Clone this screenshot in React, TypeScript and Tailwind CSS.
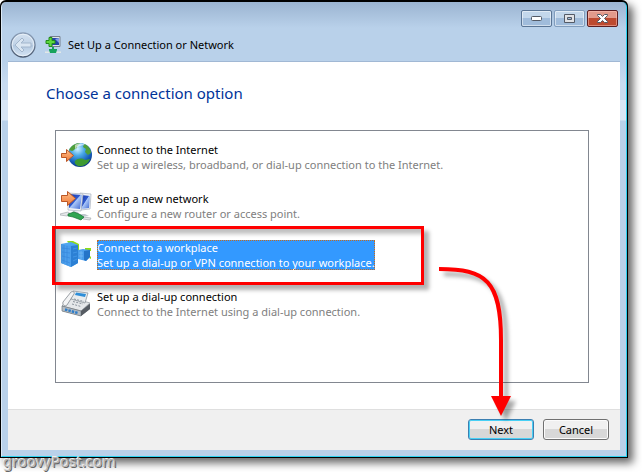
import { useState, type ReactNode } from "react";

function GlobeIcon() {
  return (
    <svg width="32" height="32" viewBox="0 0 32 32" aria-hidden="true">
      <defs>
        <radialGradient id="globe" cx=".4" cy=".25" r=".8">
          <stop offset="0" stopColor="#d3f2ff" />
          <stop offset=".35" stopColor="#4aa9e8" />
          <stop offset=".75" stopColor="#1358b4" />
          <stop offset="1" stopColor="#0a2f78" />
        </radialGradient>
        <linearGradient id="orange" x2="0" y2="1">
          <stop stopColor="#ffc08a" />
          <stop offset="1" stopColor="#f07836" />
        </linearGradient>
      </defs>
      <circle cx="20" cy="14" r="12" fill="url(#globe)" />
      <path d="M9 9c2-4 6-7 11-7-1 2-3 2-3 5-2 0-3 3-5 3zM24 3c4 1 7 5 7 9l-3 2-3-3 1-3-3-2z" fill="#4f9f3a" />
      <path d="M15 20c3-3 7-3 10-1 2 0 3-1 5-1-2 5-7 8-12 7-2-1-4-3-3-5z" fill="#3e9a31" />
      <path d="M15 4c3-2 7-2 10 0-3 0-7 1-10 4z" fill="#fff" opacity=".6" />
      <path d="M1.500 12.500h5v-4l7 6-7 6v-4h-5z" fill="url(#orange)" stroke="#bb5726" />
    </svg>
  );
}

function ComputersIcon() {
  return (
    <svg width="32" height="32" viewBox="0 0 32 32" aria-hidden="true">
      <defs>
        <linearGradient id="screen" x2="1" y2="1">
          <stop stopColor="#1433a8" />
          <stop offset=".45" stopColor="#2f59cc" />
          <stop offset=".5" stopColor="#a9c6f8" />
          <stop offset="1" stopColor="#3a63d0" />
        </linearGradient>
      </defs>
      <path d="M20 3l11 1-1 15-9 1z" fill="#f2f4f7" stroke="#a8b0bd" strokeWidth=".7" />
      <path d="M21 5l9 1-1 12-8 1z" fill="url(#screen)" />
      <path d="M8 3l15 1-2 17-13-1z" fill="#f2f4f7" stroke="#a8b0bd" strokeWidth=".7" />
      <path d="M9 4l13 1-2 14-11-1z" fill="url(#screen)" />
      <path d="M13 21l5 1 1 2h6l4 2-9 1-9-3z" fill="#c2c8cf" />
      <path d="M0 24l8-2 3 2-4 2-7-1zM23 27l8 1-1 2-7-1z" fill="#e6e8ea" stroke="#9ba1a6" strokeWidth=".6" />
      <path d="M8 24l6-2 5 2 5 3-3 3-8-3-5-1z" fill="#31a551" stroke="#187336" strokeWidth=".7" />
      <path d="M1.500 5.500h6v-4l8 7-8 7v-4h-6z" fill="url(#orange)" stroke="#bb5726" />
    </svg>
  );
}

function BuildingsIcon() {
  return (
    <svg width="32" height="32" viewBox="0 0 32 32" aria-hidden="true">
      <path d="M7 2h6l6 3v8h-4z" fill="#8fdc16" />
      <path d="M1 5l10-2 7 3v18l-7 4-10-4z" fill="#4fa6f2" />
      <path d="M11 7l7-1v18l-7 4z" fill="#2c80d4" />
      <path d="M1 5l10 2v21L1 24z" fill="#4b9eec" />
      <path d="M2 9l8 1M2 13l8 1M2 17l8 2M2 21l8 3M4 6v18M7 7v19" stroke="#3688dd" strokeWidth=".7" />
      <path d="M13 10l4-1M13 14l4-1M13 18l4-1M13 22l4-2" stroke="#4b9eec" strokeWidth=".7" />
      <path d="M25 9h6v3h-6zM29 19l2-2v3z" fill="#8fdc16" />
      <path d="M18 11l5-1 7 1v7l-4 4-8-2z" fill="#4b9eec" />
      <path d="M24 12l6-1v7l-4 4-2-1z" fill="#2474c8" />
      <path d="M19 14h4M19 17h4M21 12v8" stroke="#7abbf5" strokeWidth=".7" />
    </svg>
  );
}

function PhoneIcon() {
  return (
    <svg width="32" height="32" viewBox="0 0 32 32" aria-hidden="true">
      <path d="M2 18l8-8 20 6v5l-9 7-19-5z" fill="#7d8389" />
      <path d="M2 18l8-9 20 6-9 8z" fill="#e5e8ea" stroke="#8b9298" strokeWidth=".7" />
      <path d="M2 18l19 5v5L2 23z" fill="#b6bdc4" stroke="#71787e" strokeWidth=".7" />
      <path d="M21 23l9-7v5l-9 7z" fill="#565c63" />
      <path d="M13 3l15 2-3 10-14-4z" fill="#e8ecee" stroke="#838b92" strokeWidth=".7" />
      <path d="M16 4.500l10 1.500-1 3-10-2z" fill="#2e8ed8" />
      <path d="M3 14l8-10c2-1 4 0 3 2L7 17c-2 2-5 0-4-3z" fill="#f3f4f5" stroke="#81888f" strokeWidth=".8" />
      <path d="M14 11l10 2.500M13 13.500l10 2.500M12 16l9 2.500" stroke="#8b949d" strokeDasharray="2 1.300" />
      <path d="M5 21.500l13 3.500" stroke="#2f7ec9" strokeWidth="2.500" strokeDasharray="2.500 1" />
    </svg>
  );
}

function NetworkIcon() {
  return (
    <svg width="16" height="18" viewBox="0 0 16 18" aria-hidden="true">
      <path d="M5 .5h10v10H7z" fill="#dfe4ea" stroke="#77808d" />
      <path d="M7 2h7v7H7z" fill="#2443a6" />
      <path d="M10 3l4-1v5z" fill="#7f9ee8" />
      <path d="M0 15.500h16v1.500H0z" fill="#e1e8e7" />
      <path d="M7 11h2v2h3v1l-1 3H5l-1-3v-1h3z" fill="#17a35c" />
      <path d="M4 1.500h3v3h3v3H7v3H4v-3H1v-3h3z" fill="#5fd83c" stroke="#228a1c" />
    </svg>
  );
}

type Option = {
  id: string;
  title: string;
  detail: string;
  icon: ReactNode;
};

const OPTIONS: Option[] = [
  {
    id: "internet",
    title: "Connect to the Internet",
    detail: "Set up a wireless, broadband, or dial-up connection to the Internet.",
    icon: <GlobeIcon />,
  },
  {
    id: "network",
    title: "Set up a new network",
    detail: "Configure a new router or access point.",
    icon: <ComputersIcon />,
  },
  {
    id: "workplace",
    title: "Connect to a workplace",
    detail: "Set up a dial-up or VPN connection to your workplace.",
    icon: <BuildingsIcon />,
  },
  {
    id: "dialup",
    title: "Set up a dial-up connection",
    detail: "Connect to the Internet using a dial-up connection.",
    icon: <PhoneIcon />,
  },
];

function CaptionButtons() {
  const glass =
    "flex h-[17px] w-[31px] items-center justify-center rounded-[2px] border bg-linear-to-b from-[#c3d7eb] from-50% to-[#a0bcdb] to-50% shadow-[inset_0_0_0_1px_rgba(255,255,255,0.5)]";
  return (
    <div className="flex justify-end gap-0.5 pr-2">
      <button aria-label="Minimize" className={`${glass} border-[#5a7595]`}>
        <svg width="11" height="5" viewBox="0 0 11 5">
          <rect x=".5" y=".5" width="10" height="4" rx="1" fill="#fff" stroke="#535a66" />
        </svg>
      </button>
      <button aria-label="Maximize" className={`${glass} border-[#819dbd]`}>
        <svg width="11" height="9" viewBox="0 0 11 9">
          <path d="M.5.5h10v8H.5z M3.500 3.500h4v2h-4z" fill="#e0e2e6" fillRule="evenodd" stroke="#535a66" />
        </svg>
      </button>
      <button
        aria-label="Close"
        className="flex h-[17px] w-[31px] items-center justify-center rounded-[2px] border border-[#5c1e22] bg-linear-to-b from-[#e29a8b] from-50% to-[#bd4a30] to-50% shadow-[inset_0_0_0_1px_rgba(255,200,190,0.5)]"
      >
        <svg width="11" height="9" viewBox="0 0 11 9">
          <path d="M.5.5h3l2 2 2-2h3v1l-3 3 3 3v1h-3l-2-2-2 2h-3v-1l3-3-3-3z" fill="#fff" stroke="#535a66" />
        </svg>
      </button>
    </div>
  );
}

function OptionRow({ option, selected, onSelect }: { option: Option; selected: boolean; onSelect: () => void }) {
  return (
    <li className="relative">
      <button
        onClick={onSelect}
        aria-pressed={selected}
        className="flex h-[30px] items-center gap-[5px] text-left leading-[15px]"
      >
        <span className="shrink-0">{option.icon}</span>
        <span
          className={
            selected
              ? "bg-[#3399ff] text-white outline-1 -outline-offset-1 outline-dotted outline-[#c56a1c]"
              : "text-black"
          }
        >
          <span className="block whitespace-nowrap">{option.title}</span>
          <span className={`block whitespace-nowrap ${selected ? "" : "text-[#808080]"}`}>{option.detail}</span>
        </span>
      </button>
      {option.id === "workplace" && (
        <span className="pointer-events-none absolute -top-3.5 -left-2 h-[59px] w-[372px] border-3 border-[#ff0000] shadow-[5px_5px_4px_rgba(0,0,0,0.3),inset_5px_5px_4px_rgba(0,0,0,0.25)]" />
      )}
    </li>
  );
}

/** Curved callout that ends just above the Next button. */
function CalloutArrow() {
  return (
    <svg
      className="pointer-events-none absolute bottom-6 -left-8 drop-shadow-[5px_5px_2px_rgba(0,0,0,0.35)]"
      width="86"
      height="154"
      viewBox="0 0 86 154"
      aria-hidden="true"
    >
      <path d="M3 7C50 7 65 19 65 78v61" fill="none" stroke="#f00" strokeWidth="4" />
      <path d="M55 134h20l-10 20z" fill="#f00" />
    </svg>
  );
}

export default function App() {
  const [selected, setSelected] = useState("workplace");

  return (
    <div className="relative flex min-h-screen bg-white pr-3.5 pb-3.5 font-['Noto_Sans','Open_Sans',sans-serif] text-[11px] text-black">
      <main className="flex flex-1 rounded-t-md border border-t-2 border-black bg-black shadow-[5px_5px_8px_rgba(0,0,0,0.6)]">
        <div className="flex flex-1 flex-col rounded-t-[5px] border-x border-b border-l-[#dceaf7] border-r-[#2bd2f0] border-b-[#2bd2f0] bg-[linear-gradient(#9bb4d1,#b9d1ea_26px,#b9d1ea_60px,#c8dbf0_82px,#c8dbf0_98px,#d9e6f5_98px,#d9e6f5_118px,#b9d1ea_119px)] pb-1.5">
          <header className="pt-2 pb-[3px]">
            <CaptionButtons />
            <div className="mt-[5px] flex h-[26px] items-center pl-2">
              <button aria-label="Back" className="mr-[9px] flex">
                <svg width="26" height="26" viewBox="0 0 26 26">
                  <defs>
                    <linearGradient id="disc" x2="0" y2="1">
                      <stop stopColor="#d3e1f0" />
                      <stop offset=".5" stopColor="#c0d2e6" />
                      <stop offset=".51" stopColor="#b2c8e0" />
                      <stop offset="1" stopColor="#d6e5f4" />
                    </linearGradient>
                    <linearGradient id="ring" x2="0" y2="1">
                      <stop stopColor="#8c9fb8" />
                      <stop offset="1" stopColor="#4b5a70" />
                    </linearGradient>
                  </defs>
                  <circle cx="13" cy="13" r="12" fill="url(#disc)" stroke="url(#ring)" strokeWidth="1.300" />
                  <circle cx="13" cy="13" r="10.800" fill="none" stroke="#eef4fa" strokeOpacity=".8" />
                  <path d="M5 13l7-7 2 2-3 3h10v4H11l3 3-2 2z" fill="#dae6f2" stroke="#a3b6cc" />
                </svg>
              </button>
              <NetworkIcon />
              <h1 className="ml-[7px] leading-4">Set Up a Connection or Network</h1>
            </div>
          </header>

          <section className="mr-1.5 ml-1.5 flex flex-1 flex-col border-t border-[#a1b8d4] bg-white">
            <h2 className="mt-5 ml-[38px] text-[15px] leading-[22px] text-[#003399]">Choose a connection option</h2>
            <ul className="mt-[26px] mr-[31px] mb-[26px] ml-[47px] flex flex-1 flex-col gap-[19px] border border-[#828790] pt-[11px] pb-3 pl-1">
              {OPTIONS.map((option) => (
                <OptionRow
                  key={option.id}
                  option={option}
                  selected={option.id === selected}
                  onSelect={() => setSelected(option.id)}
                />
              ))}
            </ul>
            <footer className="flex justify-end gap-[9px] border-t border-[#dfdfdf] bg-[#f0f0f0] pt-[9px] pr-[11px] pb-2.5">
              <div className="relative flex">
                <button className="h-[21px] w-[66px] rounded-[3px] border border-[#3c7fb1] bg-linear-to-b from-[#f0f0f0] from-50% to-[#d8d8d8] to-50% leading-4 shadow-[inset_0_0_0_1px_#48d0f5]">
                  Next
                </button>
                <CalloutArrow />
              </div>
              <button className="h-[21px] w-[66px] rounded-[3px] border border-[#707070] bg-linear-to-b from-[#f0f0f0] from-50% to-[#d8d8d8] to-50% leading-4 shadow-[inset_0_0_0_1px_#fbfbfb]">
                Cancel
              </button>
            </footer>
          </section>
        </div>
      </main>
      <span className="absolute bottom-0 left-[3px] text-[15px] leading-[22px] text-[#b4b4b4] [text-shadow:-1px_-1px_0_#eeeeee,1px_1px_0_#666666]">
        groovyPost.com
      </span>
    </div>
  );
}
